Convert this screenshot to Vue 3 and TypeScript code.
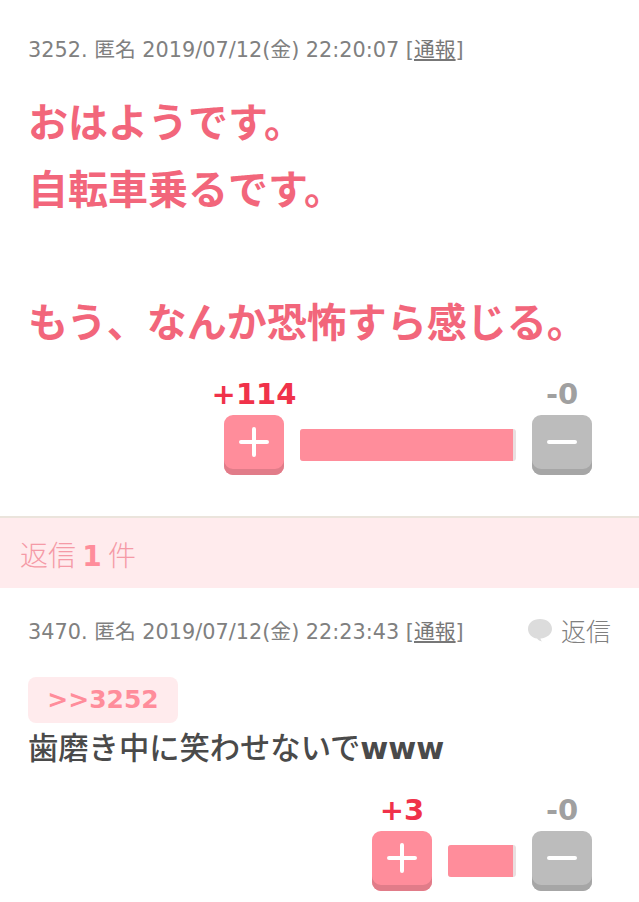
<script setup lang="ts">
interface Vote { plus: number; barWidth: number }
const first: Vote = { plus: 114, barWidth: 216 }
const second: Vote = { plus: 3, barWidth: 68 }
</script>

<template>
  <div class="page">
    <section class="post first">
      <div class="meta">
        <span>3252. 匿名 2019/07/12(金) 22:20:07 [<u>通報</u>]</span>
      </div>
      <div class="big">
        <p>おはようです。</p>
        <p>自転車乗るです。</p>
        <p>&nbsp;</p>
        <p>もう、なんか恐怖すら感じる。</p>
      </div>
      <div class="votes">
        <div class="col">
          <div class="count plus">+{{ first.plus }}</div>
          <button class="btn pink">
            <svg width="30" height="30" viewBox="0 0 30 30"><path d="M15 2v26M2 15h26" stroke="#fff" stroke-width="4" stroke-linecap="round" /></svg>
          </button>
        </div>
        <div class="bar" :style="{ width: first.barWidth + 'px' }"><div class="fill"></div></div>
        <div class="col">
          <div class="count minus">-0</div>
          <button class="btn gray">
            <svg width="30" height="30" viewBox="0 0 30 30"><path d="M2 15h26" stroke="#fff" stroke-width="4" stroke-linecap="round" /></svg>
          </button>
        </div>
      </div>
    </section>

    <div class="banner">返信 <b>1</b> 件</div>

    <section class="post second">
      <div class="meta">
        <span>3470. 匿名 2019/07/12(金) 22:23:43 [<u>通報</u>]</span>
        <span class="reply">
          <svg width="26" height="24" viewBox="0 0 26 24"><path d="M13 1C6 1 1 5 1 11c0 5 4 9 9 9.500 1 1.500 3 2.500 5 3-1-1-1.500-2-1.500-3C20 20 25 16 25 11 25 5 20 1 13 1z" fill="#dcdcdc" /></svg>
          返信
        </span>
      </div>
      <div class="anchor">&gt;&gt;3252</div>
      <p class="body">歯磨き中に笑わせないで<b>www</b></p>
      <div class="votes">
        <div class="col">
          <div class="count plus">+{{ second.plus }}</div>
          <button class="btn pink">
            <svg width="30" height="30" viewBox="0 0 30 30"><path d="M15 2v26M2 15h26" stroke="#fff" stroke-width="4" stroke-linecap="round" /></svg>
          </button>
        </div>
        <div class="bar" :style="{ width: second.barWidth + 'px' }"><div class="fill"></div></div>
        <div class="col">
          <div class="count minus">-0</div>
          <button class="btn gray">
            <svg width="30" height="30" viewBox="0 0 30 30"><path d="M2 15h26" stroke="#fff" stroke-width="4" stroke-linecap="round" /></svg>
          </button>
        </div>
      </div>
    </section>
  </div>
</template>

<style>
html, body { margin: 0; background: #fff; }
</style>

<style scoped>
.page {
  width: 639px;
  height: 902px;
  overflow: hidden;
  font-family: "DejaVu Sans", "Noto Sans CJK JP", sans-serif;
}
p { margin: 0; }
.post { padding: 0 47px 0 28px; }
.first { height: 516px; padding-top: 33px; box-sizing: border-box; }
.second { padding-top: 27px; }
.meta {
  display: flex;
  justify-content: space-between;
  align-items: center;
  height: 29px;
  font-size: 20.8px;
  color: #808080;
  margin-right: -19px;
  white-space: nowrap;
}
.meta u { color: #777; }
.big {
  margin-top: 25px;
  font-size: 40px;
  line-height: 66.5px;
  font-weight: 700;
  color: #f2667b;
  font-family: "Noto Sans CJK JP", sans-serif;
}
.votes {
  display: flex;
  justify-content: flex-end;
  align-items: flex-end;
  gap: 16px;
}
.first .votes { margin-top: 25px; }
.second .votes { margin-top: 22px; }
.col { width: 60px; display: flex; flex-direction: column; align-items: center; }
.count { font-size: 29px; line-height: 32px; font-weight: 700; height: 37px; white-space: nowrap; }
.count.plus { color: #f0324a; }
.count.minus { color: #a0a0a0; }
.btn {
  width: 60px;
  height: 60px;
  padding: 0 0 6px;
  border: none;
  border-radius: 9px;
  display: flex;
  align-items: center;
  justify-content: center;
}
.pink { background: #ff8d9b; box-shadow: inset 0 -6px 0 #e17c89; }
.gray { background: #bcbcbc; box-shadow: inset 0 -6px 0 #a6a6a6; }
.bar {
  height: 32px;
  margin-bottom: 14px;
  background: #eadfe0;
  border-radius: 3px;
  overflow: hidden;
}
.fill { height: 100%; margin-right: 3px; background: #ff8d9b; }
.banner {
  height: 70px;
  line-height: 72px;
  padding-left: 20px;
  background: #ffebed;
  border-top: 2px solid #ebe4dc;
  color: #f59aa6;
  font-size: 28px;
  font-family: "Noto Sans CJK JP", sans-serif;
  font-weight: 300;
}
.banner b { font-family: "DejaVu Sans", sans-serif; font-weight: 700; color: #ff8d9b; }
.reply {
  display: flex;
  align-items: center;
  gap: 8px;
  font-size: 25px;
  font-weight: 300;
  color: #808080;
  font-family: "Noto Sans CJK JP", sans-serif;
}
.anchor {
  margin-top: 33px;
  width: 150px;
  height: 46px;
  line-height: 46px;
  text-align: center;
  background: #ffebed;
  border-radius: 8px;
  color: #ff8d9b;
  font-size: 25px;
  font-weight: 700;
}
.body {
  margin-top: 0;
  font-size: 30.3px;
  line-height: 46px;
  font-weight: 500;
  color: #4a4a4a;
  font-family: "Noto Sans CJK JP", sans-serif;
}
.body b { font-family: "DejaVu Sans", sans-serif; font-weight: 700; }
</style>
